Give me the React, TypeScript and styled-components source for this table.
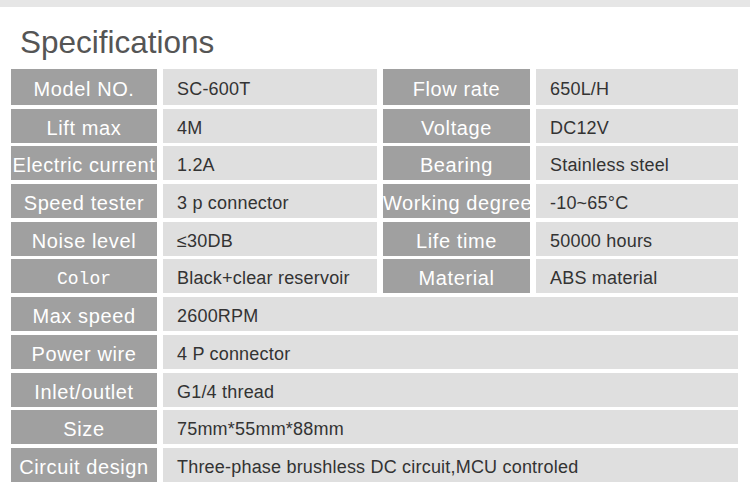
import React from "react";
import styled, { createGlobalStyle } from "styled-components";

type Spec = {
  label: string;
  value: string;
  mono?: boolean;
};

type SpecRow = Spec[];

const rows: SpecRow[] = [
  [
    { label: "Model NO.", value: "SC-600T" },
    { label: "Flow rate", value: "650L/H" },
  ],
  [
    { label: "Lift max", value: "4M" },
    { label: "Voltage", value: "DC12V" },
  ],
  [
    { label: "Electric current", value: "1.2A" },
    { label: "Bearing", value: "Stainless steel" },
  ],
  [
    { label: "Speed tester", value: "3 p connector" },
    { label: "Working degree", value: "-10~65°C" },
  ],
  [
    { label: "Noise level", value: "≤30DB" },
    { label: "Life time", value: "50000 hours" },
  ],
  [
    { label: "Color", value: "Black+clear reservoir", mono: true },
    { label: "Material", value: "ABS material" },
  ],
  [{ label: "Max speed", value: "2600RPM" }],
  [{ label: "Power wire", value: "4 P connector" }],
  [{ label: "Inlet/outlet", value: "G1/4 thread" }],
  [{ label: "Size", value: "75mm*55mm*88mm" }],
  [{ label: "Circuit design", value: "Three-phase brushless DC circuit,MCU controled" }],
];

const GlobalStyle = createGlobalStyle`
  html, body {
    margin: 0;
    padding: 0;
    background: #ffffff;
  }
  body {
    font-family: "Liberation Sans", Arial, sans-serif;
  }
`;

const Page = styled.div`
  width: 750px;
  height: 494px;
  overflow: hidden;
  background: #ffffff;
`;

const TopBar = styled.div`
  height: 7px;
  background: #e6e6e6;
`;

const Title = styled.h2`
  margin: 0;
  padding: 17px 0 0 20px;
  height: 45px;
  font-size: 31.5px;
  font-weight: normal;
  line-height: 36px;
  color: #555555;
`;

const SpecGrid = styled.div`
  display: grid;
  grid-template-columns: 146px 214px 147px 202px;
  grid-template-rows: 36px;
  grid-auto-rows: 34px;
  column-gap: 6px;
  row-gap: 3.7px;
  padding-left: 11px;
`;

const LabelCell = styled.div<{ $mono?: boolean }>`
  background: #a0a0a0;
  color: #ffffff;
  font-family: ${(p) =>
    p.$mono ? `"Liberation Mono", "DejaVu Sans Mono", monospace` : `"Liberation Sans", Arial, sans-serif`};
  font-size: ${(p) => (p.$mono ? "18px" : "20px")};
  letter-spacing: ${(p) => (p.$mono ? "0" : "0.6px")};
  white-space: nowrap;
  overflow: hidden;
  display: flex;
  align-items: center;
  padding-top: 5px;
  box-sizing: border-box;
`;

const LabelInner = styled.div`
  width: 100%;
  overflow: hidden;
  text-align: center;
`;

const ValueCell = styled.div<{ $wide?: boolean }>`
  grid-column: ${(p) => (p.$wide ? "span 3" : "span 1")};
  background: #dfdfdf;
  color: #333333;
  font-size: 18px;
  letter-spacing: 0.2px;
  white-space: nowrap;
  overflow: hidden;
  display: flex;
  align-items: center;
  padding: 5px 0 0 14px;
  box-sizing: border-box;
`;

function Label({ text, mono }: { text: string; mono?: boolean }) {
  return (
    <LabelCell $mono={mono}>
      <LabelInner>{text}</LabelInner>
    </LabelCell>
  );
}

export default function App() {
  return (
    <Page>
      <GlobalStyle />
      <TopBar />
      <Title>Specifications</Title>
      <SpecGrid>
        {rows.map((row, i) =>
          row.map((spec, j) => (
            <React.Fragment key={`${i}-${j}`}>
              <Label text={spec.label} mono={spec.mono} />
              <ValueCell $wide={row.length === 1}>{spec.value}</ValueCell>
            </React.Fragment>
          ))
        )}
      </SpecGrid>
    </Page>
  );
}
